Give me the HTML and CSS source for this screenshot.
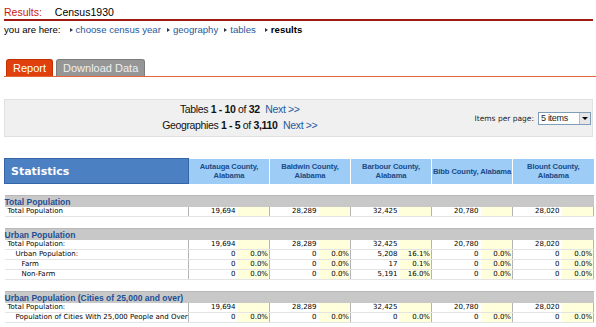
FILE: index.html
```html
<!DOCTYPE html>
<html lang="en">
<head>
    <meta charset="UTF-8">
    <meta name="viewport" content="width=device-width, initial-scale=1.0">
    <title>Census1930 - Results</title>
    <link rel="stylesheet" href="styles.css">
</head>
<body>
    <div class="page">
        <div class="title">
            <span class="title-label">Results:</span>
            <span class="title-name">Census1930</span>
        </div>
        <div class="crumbs">
            <span class="crumbs-label">you are here:</span>
            <a class="crumb" href="#">choose census year</a>
            <a class="crumb" href="#">geography</a>
            <a class="crumb" href="#">tables</a>
            <span class="crumb current">results</span>
        </div>

        <div class="tabs">
            <a class="tab active" href="#">Report</a>
            <a class="tab" href="#">Download Data</a>
        </div>

        <div class="pager">
            <div class="pager-links">
                <div>Tables <b>1 - 10</b> of <b>32</b> <a href="#">Next &gt;&gt;</a></div>
                <div>Geographies <b>1 - 5</b> of <b>3,110</b> <a href="#">Next &gt;&gt;</a></div>
            </div>
            <div class="per-page">
                <span>Items per page:</span>
                <div class="fake-select">
                    <span class="fake-select-value">5 items</span>
                    <span class="fake-select-arrow"></span>
                </div>
            </div>
        </div>

        <table class="report">
            <colgroup>
                <col class="c-stat">
                <col class="c-num"><col class="c-pct">
                <col class="c-num"><col class="c-pct">
                <col class="c-num"><col class="c-pct">
                <col class="c-num"><col class="c-pct">
                <col class="c-num"><col class="c-pct">
            </colgroup>
            <thead>
                <tr>
                    <th class="stat-head">Statistics</th>
                    <th colspan="2" class="geo-head">Autauga County, Alabama</th>
                    <th colspan="2" class="geo-head">Baldwin County, Alabama</th>
                    <th colspan="2" class="geo-head">Barbour County, Alabama</th>
                    <th colspan="2" class="geo-head">Bibb County, Alabama</th>
                    <th colspan="2" class="geo-head">Blount County, Alabama</th>
                </tr>
            </thead>
            <tbody>
                <tr class="gap"><td colspan="11"></td></tr>
                <tr class="section"><td colspan="11">Total Population</td></tr>
                <tr>
                    <td class="label">Total Population</td>
                    <td class="num">19,694</td><td class="pct"></td>
                    <td class="num">28,289</td><td class="pct"></td>
                    <td class="num">32,425</td><td class="pct"></td>
                    <td class="num">20,780</td><td class="pct"></td>
                    <td class="num">28,020</td><td class="pct"></td>
                </tr>

                <tr class="gap"><td colspan="11"></td></tr>
                <tr class="section"><td colspan="11">Urban Population</td></tr>
                <tr>
                    <td class="label">Total Population:</td>
                    <td class="num">19,694</td><td class="pct"></td>
                    <td class="num">28,289</td><td class="pct"></td>
                    <td class="num">32,425</td><td class="pct"></td>
                    <td class="num">20,780</td><td class="pct"></td>
                    <td class="num">28,020</td><td class="pct"></td>
                </tr>
                <tr>
                    <td class="label indent1">Urban Population:</td>
                    <td class="num">0</td><td class="pct">0.0%</td>
                    <td class="num">0</td><td class="pct">0.0%</td>
                    <td class="num">5,208</td><td class="pct">16.1%</td>
                    <td class="num">0</td><td class="pct">0.0%</td>
                    <td class="num">0</td><td class="pct">0.0%</td>
                </tr>
                <tr>
                    <td class="label indent2">Farm</td>
                    <td class="num">0</td><td class="pct">0.0%</td>
                    <td class="num">0</td><td class="pct">0.0%</td>
                    <td class="num">17</td><td class="pct">0.1%</td>
                    <td class="num">0</td><td class="pct">0.0%</td>
                    <td class="num">0</td><td class="pct">0.0%</td>
                </tr>
                <tr>
                    <td class="label indent2">Non-Farm</td>
                    <td class="num">0</td><td class="pct">0.0%</td>
                    <td class="num">0</td><td class="pct">0.0%</td>
                    <td class="num">5,191</td><td class="pct">16.0%</td>
                    <td class="num">0</td><td class="pct">0.0%</td>
                    <td class="num">0</td><td class="pct">0.0%</td>
                </tr>

                <tr class="gap"><td colspan="11"></td></tr>
                <tr class="section"><td colspan="11">Urban Population (Cities of 25,000 and over)</td></tr>
                <tr>
                    <td class="label">Total Population:</td>
                    <td class="num">19,694</td><td class="pct"></td>
                    <td class="num">28,289</td><td class="pct"></td>
                    <td class="num">32,425</td><td class="pct"></td>
                    <td class="num">20,780</td><td class="pct"></td>
                    <td class="num">28,020</td><td class="pct"></td>
                </tr>
                <tr>
                    <td class="label indent1">Population of Cities With 25,000 People and Over</td>
                    <td class="num">0</td><td class="pct">0.0%</td>
                    <td class="num">0</td><td class="pct">0.0%</td>
                    <td class="num">0</td><td class="pct">0.0%</td>
                    <td class="num">0</td><td class="pct">0.0%</td>
                    <td class="num">0</td><td class="pct">0.0%</td>
                </tr>
            </tbody>
        </table>
    </div>
</body>
</html>
```

FILE: styles.css
```css
body {
    margin: 0;
    padding: 0;
    background: #fff;
    font-family: "Liberation Sans", Arial, sans-serif;
    color: #000;
}
a {
    color: #1f5a9e;
    text-decoration: none;
}
.page {
    padding: 0 3px 0 4px;
}

/* title + breadcrumbs */
.title {
    padding-top: 5px;
    height: 14px;
    line-height: 14px;
    font-size: 10.5px;
    border-bottom: 2px solid #9e1a12;
}
.title-label {
    color: #cc1a0a;
}
.title-name {
    margin-left: 10px;
}
.crumbs {
    line-height: 14px;
    padding-top: 2px;
    font-size: 9.6px;
    display: flex;
    align-items: center;
}
.crumb {
    position: relative;
    padding-left: 6px;
    margin-left: 6px;
}
.crumb::before {
    content: "";
    position: absolute;
    left: 0;
    top: 5px;
    border-left: 3px solid #334;
    border-top: 2px solid transparent;
    border-bottom: 2px solid transparent;
}
.crumbs-label {
    margin-right: 3px;
}
.crumb.current {
    font-weight: bold;
    margin-left: 9px;
}

/* tabs */
.tabs {
    margin-top: 22px;
    display: flex;
    gap: 3px;
    padding-left: 2px;
    border-bottom: 1px solid #e2643a;
    margin-right: -3px;
}
.tab {
    height: 16px;
    line-height: 17px;
    font-size: 11px;
    padding: 0 6px;
    border-radius: 3px 3px 0 0;
    color: #eee;
    background: #969696;
    border: 1px solid #7c7c7c;
    border-bottom: none;
}
.tab.active {
    background: #e0400e;
    border-color: #c43000;
    color: #fff;
}

/* pager */
.pager {
    margin-top: 22px;
    height: 36px;
    background: #f0f0f0;
    border: 1px solid #e0e0e0;
    display: flex;
    align-items: center;
}
.pager-links {
    flex: 1;
    text-align: center;
    font-size: 10.5px;
    line-height: 16px;
    letter-spacing: -0.35px;
    color: #111;
    padding-bottom: 2px;
}
.pager-links a {
    margin-left: 3px;
}
.per-page {
    display: flex;
    align-items: center;
    gap: 4px;
    padding-right: 1px;
    font-family: "DejaVu Sans", Verdana, sans-serif;
    font-size: 7.5px;
    color: #222;
}
.fake-select {
    width: 53px;
    height: 13px;
    border: 1px solid #7f9db9;
    background: #fff;
    display: flex;
    align-items: center;
    box-sizing: border-box;
}
.fake-select-value {
    flex: 1;
    padding-left: 2px;
    font-family: "Liberation Sans", Arial, sans-serif;
    font-size: 9px;
    letter-spacing: -0.3px;
}
.fake-select-arrow {
    width: 10px;
    height: 11px;
    background: #e6e6e6;
    border-left: 1px solid #bbb;
    position: relative;
}
.fake-select-arrow::after {
    content: "";
    position: absolute;
    left: 2px;
    top: 4px;
    border-top: 3px solid #000;
    border-left: 3px solid transparent;
    border-right: 3px solid transparent;
}

/* report table */
.report {
    margin-top: 21px;
    width: 589px;
    table-layout: fixed;
    border-collapse: collapse;
    font-family: "DejaVu Sans", Tahoma, Verdana, sans-serif;
    font-size: 7px;
}
.c-stat { width: 184px; }
.c-num { width: 49px; }
.c-pct { width: 32px; }
.stat-head {
    height: 24px;
    padding: 0 0 0 6px;
    text-align: left;
    color: #fff;
    font-family: "DejaVu Sans", Verdana, sans-serif;
    font-size: 11px;
    background: #4b80c2;
    border: 1px solid #3566a8;
}
.geo-head {
    padding: 0;
    height: 24px;
    color: #1b4a86;
    font-family: "Liberation Sans", Tahoma, Arial, sans-serif;
    font-size: 7.6px;
    line-height: 9px;
    letter-spacing: -0.1px;
    font-weight: bold;
    background: #9dccf6;
    border-left: 1px solid #fff;
    vertical-align: middle;
}
.gap td {
    height: 11px;
    padding: 0;
}
.section td {
    height: 11px;
    padding: 0 0 0 5px;
    background: #c8c8c8;
    color: #1d4f94;
    font-family: "Liberation Sans", Tahoma, Arial, sans-serif;
    font-weight: bold;
    font-size: 8.5px;
    border-top: 1px solid #b8b8b8;
}
.report td {
    padding: 0;
}
tbody tr td.label,
tbody tr td.num,
tbody tr td.pct {
    height: 9px;
    line-height: 9px;
    border-bottom: 1px solid #e4e4e4;
}
td.label {
    padding-left: 3px;
    white-space: nowrap;
}
td.label.indent1 { padding-left: 11px; }
td.label.indent2 { padding-left: 17px; }
td.num {
    text-align: right;
    padding-right: 2px;
    border-left: 1px solid #b4b4b4;
}
td.pct {
    text-align: right;
    padding-right: 1px;
    background: #ffffdc;
}
tbody tr td.pct:last-child {
    border-right: 1px solid #b4b4b4;
}
```
